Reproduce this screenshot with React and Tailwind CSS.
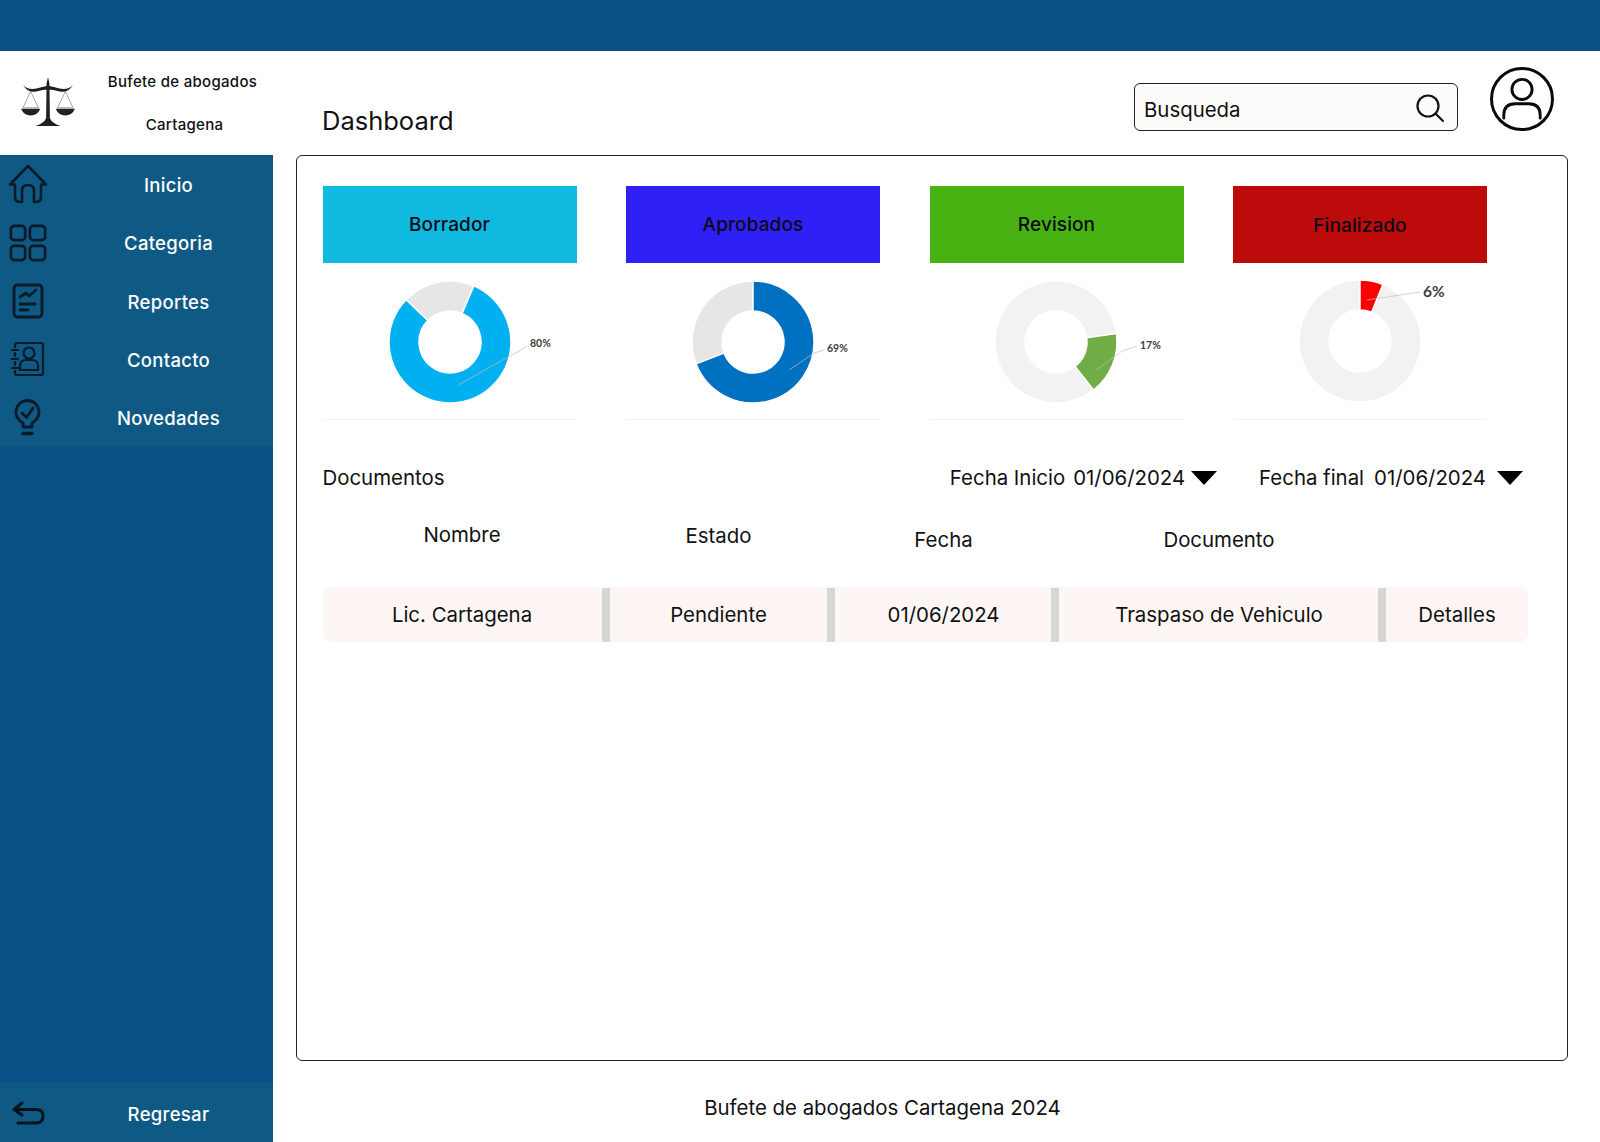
const navItems = [
  { label: 'Inicio', icon: HomeIcon },
  { label: 'Categoria', icon: GridIcon },
  { label: 'Reportes', icon: ReportIcon },
  { label: 'Contacto', icon: ContactIcon },
  { label: 'Novedades', icon: BulbIcon },
];

const charts = [
  {
    title: 'Borrador', tile: 'bg-[#0fb9e0]', color: '#00b0f0', rest: '#e7e6e6', from: 23, to: 314, label: '80%',
    labelX: 207, labelY: 84, size: 10.5, line: 'M 135 122 L 196 88 L 204 83', labelPad: 'pt-[2px]',
  },
  {
    title: 'Aprobados', tile: 'bg-[#2f20f5]', color: '#0070c0', rest: '#e7e6e6', from: 0, to: 249, label: '69%',
    labelX: 201, labelY: 89, size: 10.5, line: 'M 163 107 L 188 90 L 198 87', labelPad: 'pt-[2px]',
  },
  {
    title: 'Revision', tile: 'bg-[#48b212]', color: '#70ad47', rest: '#f2f2f2', from: 82, to: 142, label: '17%',
    labelX: 210, labelY: 86, size: 10.5, line: 'M 165 108 L 192 88 L 207 83', cx: 126, labelPad: 'pt-[2px]',
  },
  {
    title: 'Finalizado', tile: 'bg-[#bd0b0b]', color: '#ff0000', rest: '#f2f2f2', from: 0, to: 22, label: '6%',
    labelX: 190, labelY: 34, size: 15.5, line: 'M 134 37 L 187 29', cy: 78, labelPad: 'pt-[4px]',
  },
];

const columns = [
  { title: 'Nombre', value: 'Lic. Cartagena', width: 'w-[279px]', head: 'pt-0', pad: '' },
  { title: 'Estado', value: 'Pendiente', width: 'w-[217px]', head: 'pt-px', pad: 'pl-px' },
  { title: 'Fecha', value: '01/06/2024', width: 'w-[216px]', head: 'pt-[5px]', pad: 'pl-[2px]' },
  { title: 'Documento', value: 'Traspaso de Vehiculo', width: 'w-[319px]', head: 'pt-[5px]', pad: 'pl-[2px]' },
  { title: '', value: 'Detalles', width: 'w-[142px]', head: 'pt-0', pad: 'pl-px' },
];

function HomeIcon() {
  return (
    <svg width="40" height="40" viewBox="0 0 40 40" fill="none" stroke="#0b1a26" strokeWidth="2.6" strokeLinejoin="round" strokeLinecap="round">
      <path d="M2 20.5 L20 2 L38 20.5 H33 V33 Q33 38 28 38 H26 V27 Q26 21 20 21 Q14 21 14 27 V38 H12 Q7 38 7 33 V20.5 Z" />
    </svg>
  );
}

function GridIcon() {
  return (
    <svg width="38" height="38" viewBox="0 0 40 40" fill="none" stroke="#0b1a26" strokeWidth="2.8">
      <rect x="2" y="2" width="15" height="15" rx="3.5" />
      <rect x="22" y="2" width="16" height="15" rx="3.5" />
      <rect x="2" y="23" width="15" height="15" rx="3.5" />
      <rect x="22" y="23" width="16" height="15" rx="3.5" />
    </svg>
  );
}

function ReportIcon() {
  return (
    <svg width="32" height="36" viewBox="0 0 32 36" fill="none" stroke="#0b1a26" strokeWidth="2.8" strokeLinecap="round" strokeLinejoin="round">
      <rect x="2" y="2" width="28" height="32" rx="3.5" />
      <path d="M8 14 L14 10 L17 13 L24 7" />
      <path d="M8 21 H23" />
      <path d="M8 27 H16" />
    </svg>
  );
}

function ContactIcon() {
  return (
    <svg width="34" height="36" viewBox="0 0 34 36" fill="none" stroke="#0b1a26" strokeWidth="2.2" strokeLinecap="round" strokeLinejoin="round">
      <path d="M4 6 V4 Q4 2 6 2 H30 Q32 2 32 4 V32 Q32 34 30 34 H6 Q4 34 4 32 V30" />
      <path d="M4 12 V15 M4 21 V24" />
      <path d="M1 9 H7 M1 18 H7 M1 27 H7" />
      <circle cx="18" cy="12" r="5.5" />
      <path d="M9 29 V25 Q9 19 15 19 H21 Q27 19 27 25 V29 Z" />
    </svg>
  );
}

function BulbIcon() {
  return (
    <svg width="27" height="37" viewBox="0 0 27 37" fill="none" stroke="#0b1a26" strokeWidth="2.8" strokeLinecap="round" strokeLinejoin="round">
      <path d="M9 28 V24 Q2 20 2 13 A11.5 11.5 0 0 1 25 13 Q25 20 18 24 V28 Z" />
      <path d="M8 14 L12.5 18.5 L19 9" />
      <path d="M9 34.5 H18" strokeWidth="3.4" />
    </svg>
  );
}

function BackIcon() {
  return (
    <svg width="34" height="24" viewBox="0 0 34 24" fill="none" stroke="#06121b" strokeWidth="3" strokeLinecap="round" strokeLinejoin="round">
      <path d="M10 2 L2 8.5 L10 14" />
      <path d="M3 8.5 H24 Q31 8.5 31 15 Q31 22 24 22 H6" />
    </svg>
  );
}

function ScalesLogo() {
  return (
    <svg width="56" height="52" viewBox="0 0 58 54" fill="none">
      <path d="M27.5 8 L29 1 L30.5 8 L31 46 H27 Z" fill="#231f20" />
      <path d="M3 9 Q8 15 17 13 Q23 11 29 10 Q35 11 41 13 Q50 15 55 9 Q50 18 41 16 Q34 14 29 14 Q24 14 17 16 Q8 18 3 9 Z" fill="#231f20" />
      <path d="M11 16 L3 33 H19 Z M47 16 L39 33 H55 Z" stroke="#777" strokeWidth="0.7" />
      <path d="M1 34 H21 Q18 41 11 41 Q4 41 1 34 Z M37 34 H57 Q54 41 47 41 Q40 41 37 34 Z" fill="#231f20" />
      <path d="M16 52 Q25 49 27 44 H31 Q33 49 42 52 Z" fill="#231f20" />
    </svg>
  );
}

function point(cx, cy, r, deg) {
  const rad = ((deg - 90) * Math.PI) / 180;
  return `${(cx + r * Math.cos(rad)).toFixed(2)} ${(cy + r * Math.sin(rad)).toFixed(2)}`;
}

function slice(cx, cy, r, inner, from, to) {
  const large = to - from > 180 ? 1 : 0;
  return `M ${point(cx, cy, r, from)} A ${r} ${r} 0 ${large} 1 ${point(cx, cy, r, to)} L ${point(cx, cy, inner, to)} A ${inner} ${inner} 0 ${large} 0 ${point(cx, cy, inner, from)} Z`;
}

function Donut({ chart }) {
  const cx = chart.cx ?? 127;
  const cy = chart.cy ?? 79;
  return (
    <svg width="254" height="157" viewBox="0 0 254 157">
      <path d={slice(cx, cy, 61, 31, chart.to, chart.from + 360)} fill={chart.rest} stroke="#fff" strokeWidth="1.5" />
      <path d={slice(cx, cy, 61, 31, chart.from, chart.to)} fill={chart.color} stroke="#fff" strokeWidth="1.5" />
      <path d={chart.line} fill="none" stroke="#bfbfbf" strokeWidth="0.7" />
      <text x={chart.labelX} y={chart.labelY} fontSize={chart.size} fontWeight="700" fill="#404040" fontFamily="Lato, sans-serif">
        {chart.label}
      </text>
    </svg>
  );
}

function DateFilter({ label, value, gap }) {
  return (
    <div className={`flex items-center ${gap}`}>
      <span>{label}</span>
      <span>{value}</span>
    </div>
  );
}

function Triangle() {
  return (
    <svg width="26" height="14" viewBox="0 0 26 14">
      <path d="M0 0 H26 L13 14 Z" fill="#000" />
    </svg>
  );
}

export default function App() {
  return (
    <div className="h-[1142px] w-[1600px] overflow-hidden bg-white font-['Inter',sans-serif] text-[#111]">
      <div className="h-[51px] bg-[#0a5187]" />
      <div className="flex h-[1091px]">
        <aside className="flex w-[273px] flex-col">
          <div className="flex h-[104px] items-center">
            <div className="flex w-[96px] justify-center pb-[2px]">
              <ScalesLogo />
            </div>
            <div className="w-[177px] text-center text-[15px] font-medium tracking-[0.3px] text-[#111]">
              <p className="-ml-[4px] leading-[43px]">Bufete de abogados</p>
              <p className="leading-[43px]">Cartagena</p>
            </div>
          </div>
          <div className="flex flex-1 flex-col bg-[#0a5187]">
            <nav className="bg-[#0f5a85]">
              {navItems.map(({ label, icon: Icon }) => (
                <a key={label} className="flex h-[58.4px] items-center">
                  <span className="flex w-[55px] shrink-0 justify-center">
                    <Icon />
                  </span>
                  <span className="w-[227px] shrink-0 pt-[3px] text-center text-[18.5px] font-medium tracking-[0.3px] text-white">{label}</span>
                </a>
              ))}
            </nav>
            <a className="mt-auto flex h-[59px] items-center bg-[#0f5a85]">
              <span className="flex w-[58px] shrink-0 justify-center">
                <BackIcon />
              </span>
              <span className="w-[221px] shrink-0 pt-[4px] text-center text-[18.5px] font-medium tracking-[0.3px] text-white">Regresar</span>
            </a>
          </div>
        </aside>

        <main className="flex flex-1 flex-col pl-[23px] pr-[32px]">
          <header className="flex h-[104px] items-start">
            <h1 className="ml-[26px] mt-[53px] text-[25.5px] font-normal leading-[33px]">Dashboard</h1>
            <div className="ml-auto mt-[32px] flex h-[48px] w-[324px] items-center justify-between rounded-md border border-[#222] bg-[#fefcfb] pl-[9px] pr-[12px] pt-[6px] text-[20.4px]">
              <span>Busqueda</span>
              <svg className="-mt-[5px]" width="30" height="30" viewBox="0 0 30 30" fill="none" stroke="#111" strokeWidth="2.2" strokeLinecap="round">
                <circle cx="13" cy="13" r="10.5" />
                <path d="M20.5 20.5 L28 28" />
              </svg>
            </div>
            <div className="ml-[32px] mr-[14px] mt-[16px] flex size-[64px] items-center justify-center rounded-full border-[3px] border-[#0a0a0a]">
              <svg width="46" height="46" viewBox="0 0 48 48" fill="none" stroke="#0a0a0a" strokeWidth="3" strokeLinecap="round">
                <circle cx="24" cy="14" r="10.5" />
                <path d="M5 44 V41 Q5 29 17 29 H31 Q43 29 43 41 V44" />
              </svg>
            </div>
          </header>

          <section className="h-[906px] rounded-md border border-[#222] pl-[25.5px] pr-[26px] pt-[30px] text-[20.4px]">
            <div className="flex gap-[49.5px]">
              {charts.map((chart) => (
                <div key={chart.title} className="w-[254px]">
                  <div className={`flex h-[77px] items-center justify-center text-[19px] font-medium tracking-[0.1px] text-[#0a0a14] ${chart.tile} ${chart.labelPad}`}>
                    {chart.title}
                  </div>
                  <div className="h-[157px] border-b border-[#f2f2f2]">
                    <Donut chart={chart} />
                  </div>
                </div>
              ))}
            </div>

            <div className="mt-[43px] flex h-[30px] items-center">
              <span>Documentos</span>
              <div className="ml-auto flex items-center">
                <DateFilter label="Fecha Inicio" value="01/06/2024" gap="gap-2" />
                <span className="ml-1.5 mr-[42px]"><Triangle /></span>
                <DateFilter label="Fecha final" value="01/06/2024" gap="gap-2.5" />
                <span className="ml-[11px] mr-[18px]"><Triangle /></span>
              </div>
            </div>

            <div className="mt-[27px] flex h-[67px] w-[1205px] text-center">
              {columns.map((col, i) => (
                <div key={col.value} className={`${col.width} ${col.head} ${col.pad} ${i > 0 ? 'ml-[8px]' : ''}`}>
                  {col.title}
                </div>
              ))}
            </div>

            <div className="flex h-[55px] w-[1205px] overflow-hidden rounded-lg bg-[#fdf6f4] pt-px text-center">
              {columns.map((col, i) => (
                <div key={col.value} className={`flex ${col.width} ${col.pad} items-center justify-center ${i > 0 ? 'ml-[8px]' : ''} ${i < 4 ? 'shadow-[8px_0_0_#d6d6d6]' : ''}`}>
                  {col.value}
                </div>
              ))}
            </div>
          </section>

          <footer className="flex flex-1 items-center justify-center pr-[99px] pt-[14px] text-[20.4px]">
            Bufete de abogados Cartagena 2024
          </footer>
        </main>
      </div>
    </div>
  );
}
